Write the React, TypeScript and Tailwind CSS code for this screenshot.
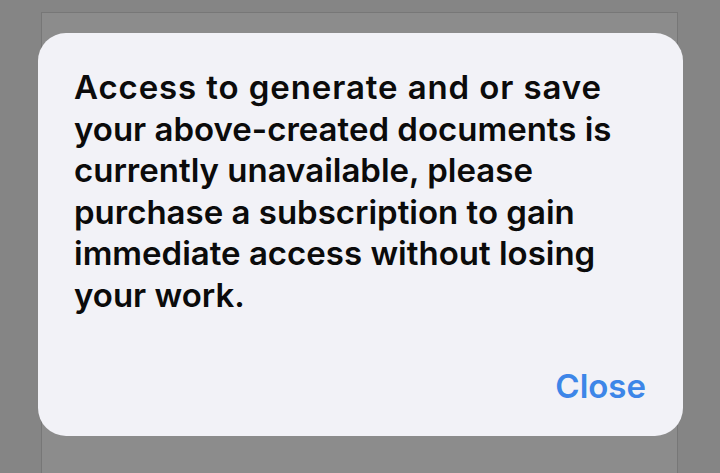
export default function App() {
    return (
        <div className="relative w-[720px] h-[473px] overflow-hidden bg-[#858585]" style={{ fontFamily: 'Inter, "Noto Sans", sans-serif' }}>
            <div className="ml-[41px] mt-[12px] w-[637px] h-[461px] bg-[#8c8c8c] border-l border-t border-r border-[#777777]" />

            <div className="absolute left-[38px] top-[33px] w-[645px] h-[403px] rounded-[28px] bg-[#f2f2f7] flex flex-col justify-between pl-[36px] pr-[30px] pt-[34px] pb-[30px]">
                <p className="text-[33px] leading-[41.6px] font-semibold text-[#0b0b0b] whitespace-nowrap">
                    <span className="tracking-[0.9px]">Access to generate and or save</span><br />
                    your above-created documents is<br />
                    currently unavailable, please<br />
                    purchase a subscription to gain<br />
                    immediate access without losing<br />
                    your work.
                </p>
                <div className="flex justify-end pr-[7px]">
                    <button className="text-[33px] leading-[40px] font-semibold text-[#3d86e8]">Close</button>
                </div>
            </div>
        </div>
    );
}
